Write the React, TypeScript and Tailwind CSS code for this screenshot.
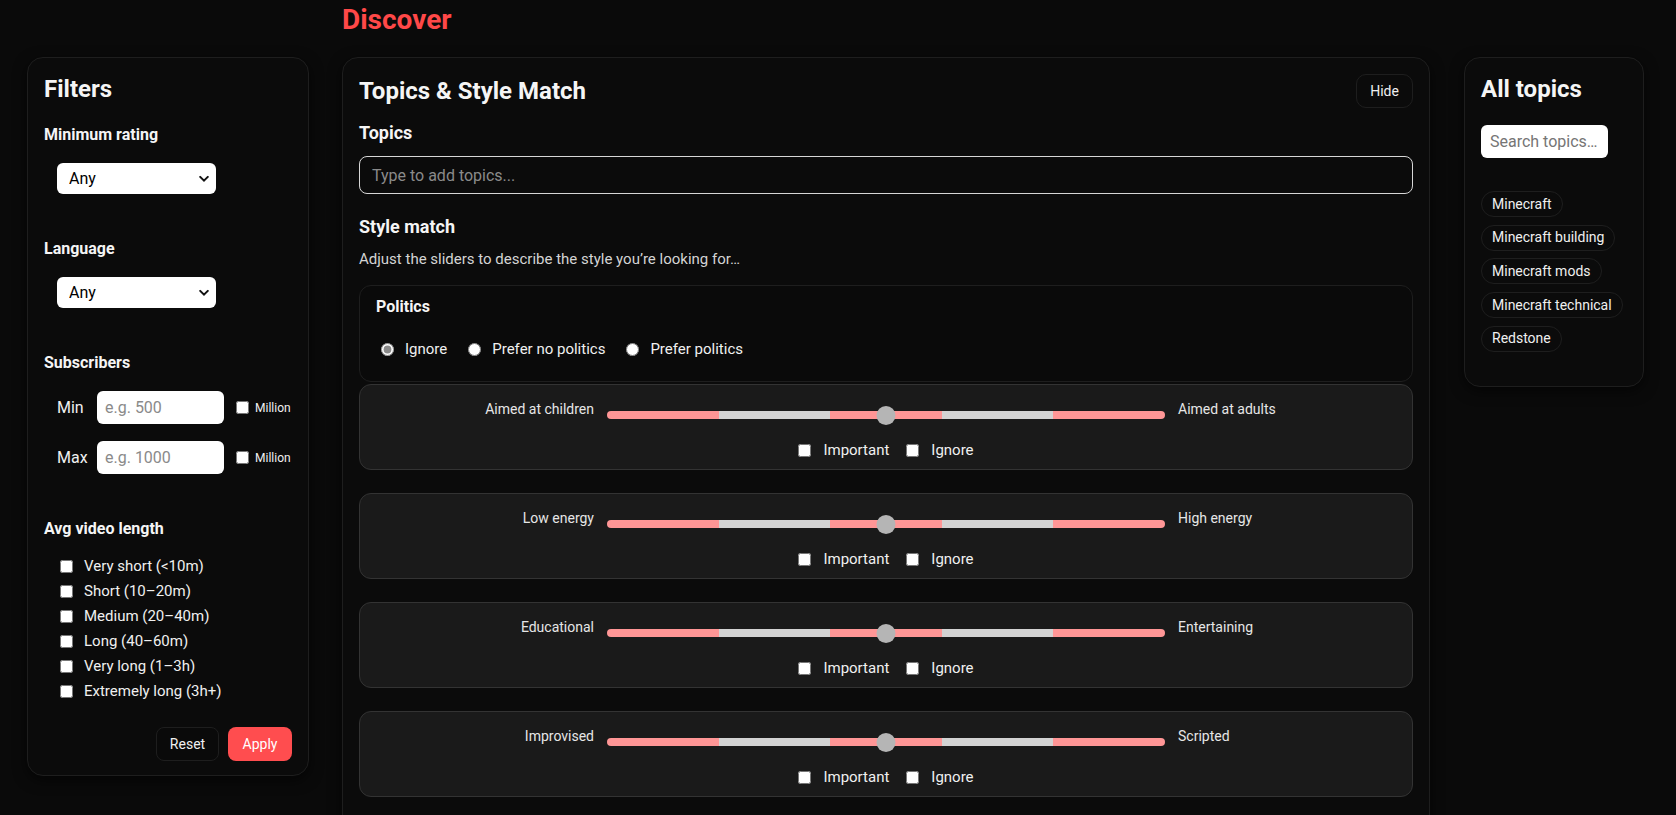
import { useState } from 'react';

const LENGTHS = [
  'Very short (<10m)',
  'Short (10–20m)',
  'Medium (20–40m)',
  'Long (40–60m)',
  'Very long (1–3h)',
  'Extremely long (3h+)',
];

const SLIDERS = [
  ['Aimed at children', 'Aimed at adults'],
  ['Low energy', 'High energy'],
  ['Educational', 'Entertaining'],
  ['Improvised', 'Scripted'],
];

const TOPICS = ['Minecraft', 'Minecraft building', 'Minecraft mods', 'Minecraft technical', 'Redstone'];

const SEGMENTS = ['bg-[#ff9696]', 'bg-[#d3d3d3]', 'bg-[#ff9696]', 'bg-[#d3d3d3]', 'bg-[#ff9696]'];

const panel = 'rounded-2xl border border-[#1e1e1e] bg-[#0b0b0b] shadow-[0_4px_14px_rgba(0,0,0,0.6)]';

function Chevron() {
  return (
    <svg
      className="pointer-events-none absolute right-[7px] top-1/2 -translate-y-1/2"
      width="10"
      height="7"
      viewBox="0 0 10 7"
      fill="none"
    >
      <path d="M1.2 1.4 5 5.2l3.8-3.8" stroke="#111" strokeWidth="2" strokeLinecap="round" />
    </svg>
  );
}

function Select() {
  return (
    <div className="relative ml-[13px] mt-[18px] h-[31px] w-[159px]">
      <select className="h-full w-full appearance-none rounded-md bg-white pl-3 text-[16px] text-black outline-none">
        <option>Any</option>
      </select>
      <Chevron />
    </div>
  );
}

function SubRow({ label, placeholder, className }: { label: string; placeholder: string; className: string }) {
  return (
    <div className={`flex h-[33px] items-center pl-[13px] ${className}`}>
      <span className="w-10 text-[16px] text-[#f0f0f0]">{label}</span>
      <input
        placeholder={placeholder}
        className="h-[33px] w-[127px] rounded-md bg-white px-2 text-[16px] text-black placeholder:text-[#8a8a8a] outline-none"
      />
      <input type="checkbox" className="m-0 ml-3 h-[13px] w-[13px]" />
      <span className="ml-[6px] text-[12px] text-[#f0f0f0]">Million</span>
    </div>
  );
}

function Filters() {
  const [picked, setPicked] = useState<string[]>([]);
  const toggle = (l: string) =>
    setPicked(prev => (prev.includes(l) ? prev.filter(x => x !== l) : [...prev, l]));

  return (
    <aside className={`${panel} mr-[33px] mt-[57px] w-[282px] shrink-0 px-4 pb-[14px] pt-[17px]`}>
      <h2 className="text-[24px] font-bold leading-[28px] text-[#f5f5f5]">Filters</h2>

      <h3 className="mt-[22px] text-[16px] font-bold leading-5">Minimum rating</h3>
      <Select />

      <h3 className="mt-[45px] text-[16px] font-bold leading-5">Language</h3>
      <Select />

      <h3 className="mt-[45px] text-[16px] font-bold leading-5">Subscribers</h3>
      <SubRow label="Min" placeholder="e.g. 500" className="mt-[18px]" />
      <SubRow label="Max" placeholder="e.g. 1000" className="mt-[17px]" />

      <h3 className="mt-[45px] text-[16px] font-bold leading-5">Avg video length</h3>
      <div className="mt-[15px] flex flex-col">
        {LENGTHS.map(l => (
          <label key={l} className="flex h-[25px] items-center pl-4 text-[15px] text-[#f0f0f0]">
            <input
              type="checkbox"
              checked={picked.includes(l)}
              onChange={() => toggle(l)}
              className="m-0 h-[13px] w-[13px]"
            />
            <span className="ml-[11px]">{l}</span>
          </label>
        ))}
      </div>

      <div className="mt-[23px] flex justify-end gap-[9px]">
        <button className="h-[34px] w-[63px] rounded-lg border border-[#1e1e1e] bg-[#0a0a0a] text-[14px] text-[#f0f0f0]">
          Reset
        </button>
        <button className="h-[34px] w-[64px] rounded-lg bg-[#ff4d4f] text-[14px] text-white">Apply</button>
      </div>
    </aside>
  );
}

function StyleSlider({ left, right }: { left: string; right: string }) {
  return (
    <div className="mb-[23px] h-[86px] rounded-xl border border-[#333] bg-[#1a1a1a] px-4 pt-[14px]">
      <div className="flex items-start">
        <span className="w-[218px] text-right text-[14px] leading-5 text-[#e6e6e6]">{left}</span>
        <div className="relative mx-[13px] mt-[6px] h-5 flex-1">
          <div className="absolute left-0 right-0 top-[6px] flex h-2 overflow-hidden rounded-full">
            {SEGMENTS.map((c, i) => (
              <div key={i} className={`flex-1 ${c}`} />
            ))}
          </div>
          <div className="absolute left-1/2 top-[0.5px] h-[19px] w-[19px] -translate-x-1/2 rounded-full bg-[#b5b5b5]" />
        </div>
        <span className="w-[218px] text-[14px] leading-5 text-[#e6e6e6]">{right}</span>
      </div>
      <div className="mt-[15px] flex h-5 items-center justify-center text-[15px] text-[#f0f0f0]">
        <label className="flex items-center">
          <input type="checkbox" className="m-0 h-[13px] w-[13px]" />
          <span className="ml-3">Important</span>
        </label>
        <label className="ml-[17px] flex items-center">
          <input type="checkbox" className="m-0 h-[13px] w-[13px]" />
          <span className="ml-3">Ignore</span>
        </label>
      </div>
    </div>
  );
}

function Politics() {
  const [choice, setChoice] = useState('ignore');
  const opts = [
    ['ignore', 'Ignore'],
    ['none', 'Prefer no politics'],
    ['prefer', 'Prefer politics'],
  ];
  return (
    <div className="mb-[2px] mt-4 h-[97px] rounded-xl border border-[#1e1e1e] bg-[#0a0a0a] px-4 pt-[11px]">
      <h4 className="text-[16px] font-bold leading-5">Politics</h4>
      <div className="mt-[22px] flex h-5 items-center gap-4 text-[15px] text-[#f0f0f0]">
        {opts.map(([v, l]) => (
          <label key={v} className="flex items-center">
            <input
              type="radio"
              name="politics"
              checked={choice === v}
              onChange={() => setChoice(v)}
              className="m-0 ml-[5px] h-[13px] w-[13px] accent-[#8a8a8a]"
            />
            <span className="ml-[11px]">{l}</span>
          </label>
        ))}
      </div>
    </div>
  );
}

function Main() {
  return (
    <main className="min-w-0 flex-1">
      <h1 className="mt-[3px] h-[54px] text-[28px] font-bold leading-[34px] text-[#ff4848]">Discover</h1>
      <section className={`${panel} px-4 pb-4 pt-4`}>
        <div className="flex h-[34px] items-center justify-between">
          <h2 className="text-[24px] font-bold leading-[28px] text-[#f5f5f5]">Topics &amp; Style Match</h2>
          <button className="h-[34px] w-[57px] rounded-[10px] border border-[#1e1e1e] text-[14px] text-[#f0f0f0]">
            Hide
          </button>
        </div>

        <h3 className="mt-[14px] text-[18px] font-bold leading-[22px]">Topics</h3>
        <input
          placeholder="Type to add topics..."
          className="mt-3 h-[38px] w-full rounded-lg border border-[#d6d6d6] bg-transparent px-3 text-[16px] text-white placeholder:text-[#8a8a8a] outline-none"
        />

        <h3 className="mt-[22px] text-[18px] font-bold leading-[22px]">Style match</h3>
        <p className="mt-[11px] text-[15px] leading-5 text-[#d4d4d4]">
          Adjust the sliders to describe the style you’re looking for…
        </p>

        <Politics />
        {SLIDERS.map(([l, r]) => (
          <StyleSlider key={l} left={l} right={r} />
        ))}
      </section>
    </main>
  );
}

function AllTopics() {
  return (
    <aside className={`${panel} ml-[34px] mt-[57px] w-[180px] shrink-0 px-4 pb-[34px] pt-[17px]`}>
      <h2 className="text-[24px] font-bold leading-[28px] text-[#f5f5f5]">All topics</h2>
      <input
        placeholder="Search topics…"
        className="mt-[22px] h-[33px] w-[127px] rounded-md bg-white px-[9px] text-[16px] text-black placeholder:text-[#757575] outline-none"
      />
      <div className="mt-[33px] flex flex-col items-start gap-[7.7px]">
        {TOPICS.map(t => (
          <span
            key={t}
            className="flex h-[26px] items-center rounded-full border border-[#1e1e1e] px-[10px] text-[14px] text-[#f0f0f0]"
          >
            {t}
          </span>
        ))}
      </div>
    </aside>
  );
}

export default function App() {
  return (
    <div className="flex min-h-screen items-start bg-[#0a0a0a] pl-[27px] pr-[32px] font-['Roboto','Liberation_Sans',sans-serif] text-[#f5f5f5]">
      <Filters />
      <Main />
      <AllTopics />
    </div>
  );
}
